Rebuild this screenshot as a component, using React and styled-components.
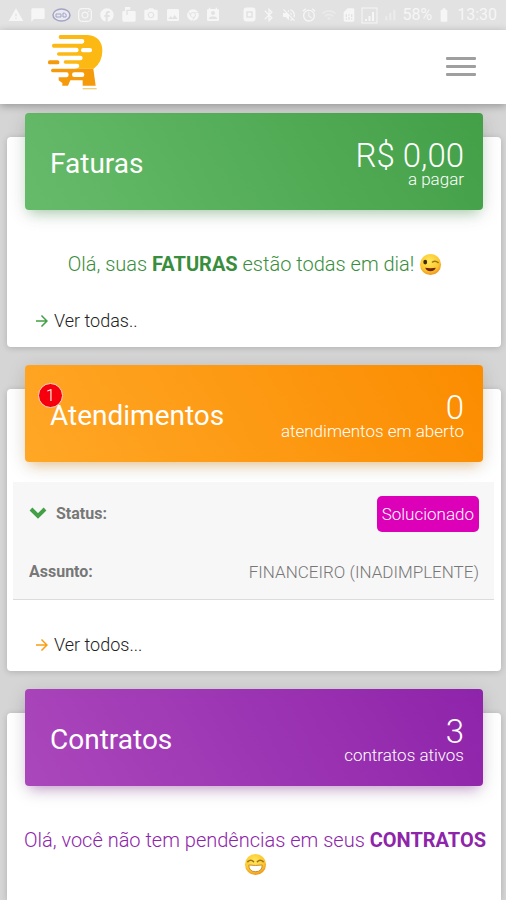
import React from "react";
import styled, { createGlobalStyle } from "styled-components";
import {
  MdWarning, MdChatBubble, MdFacebook, MdImage, MdBluetooth, MdVolumeOff,
  MdAlarm, MdWifi, MdSignalCellularAlt, MdBatteryFull, MdArrowForward,
  MdMarkunreadMailbox, MdPermContactCalendar, MdCameraAlt, MdSimCard,
} from "react-icons/md";
import { FaInstagram, FaChrome } from "react-icons/fa";

const GlobalStyle = createGlobalStyle`
  * { box-sizing: border-box; }
  body {
    margin: 0;
    background: #d5d5d5;
    font-family: Roboto, "Liberation Sans", sans-serif;
    font-weight: 300;
  }
  h2, p, dl, dd { margin: 0; }
`;

const Page = styled.div`
  display: flex;
  flex-direction: column;
  min-height: 100vh;
  overflow: hidden;
`;

const StatusBar = styled.div`
  display: flex;
  align-items: center;
  justify-content: space-between;
  height: 30px;
  padding: 0 9px 0 8px;
  background: #e2e2e2;
  color: #f6f6f6;
`;

const IconGroup = styled.div`
  display: flex;
  align-items: center;
  gap: ${(p) => p.$gap}px;
  font-size: 16px;
  line-height: 20px;
  font-weight: 400;
`;

const Clock = styled.span`
  margin-left: 1px;
`;

const TopBar = styled.header`
  display: flex;
  align-items: center;
  justify-content: space-between;
  height: 74px;
  padding: 0 30px 0 46px;
  background: #fff;
  box-shadow: 0 2px 8px rgba(0, 0, 0, 0.3);
  z-index: 1;
`;

const HomeLink = styled.a`
  display: flex;
  padding-bottom: 8px;
`;

const MenuButton = styled.button`
  display: flex;
  flex-direction: column;
  gap: 5px;
  width: 30px;
  padding: 0 0 2px;
  border: 0;
  background: none;
`;

const MenuLine = styled.span`
  width: 100%;
  height: 3px;
  border-radius: 1px;
  background: #9f9f9f;
`;

const Cards = styled.main`
  display: flex;
  flex: 1;
  flex-direction: column;
  gap: 42px;
  padding: 33px 5px 0 7px;
`;

const CardBox = styled.section`
  display: flex;
  flex-direction: column;
  border-radius: 4px;
  background: #fff;
  box-shadow: 0 1px 6px rgba(0, 0, 0, 0.18);

  &:last-child {
    flex: 1;
    border-radius: 4px 4px 0 0;
  }
`;

const Banner = styled.div`
  display: flex;
  align-items: center;
  justify-content: space-between;
  height: 97px;
  margin: -24px 18px 0;
  padding: 0 19px 0 25px;
  border-radius: 4px;
  color: #fff;
  background: linear-gradient(60deg, ${(p) => p.$from}, ${(p) => p.$to});
  box-shadow: 0 4px 20px rgba(0, 0, 0, 0.12), 0 7px 12px -5px ${(p) => p.$glow};
`;

const TitleWrap = styled.div`
  position: relative;
  padding-top: 4px;
`;

const Title = styled.h2`
  position: relative;
  font-size: 28px;
  line-height: 34px;
  font-weight: 400;
`;

const Count = styled.span`
  position: absolute;
  top: -12px;
  left: -12px;
  width: 25px;
  height: 25px;
  border: 1px solid #ffd9c8;
  border-radius: 50%;
  background: #f5000c;
  font-size: 16px;
  line-height: 23px;
  text-align: center;
`;

const Summary = styled.div`
  display: flex;
  flex-direction: column;
  padding-top: 7px;
  text-align: right;
`;

const Value = styled.span`
  font-size: 33px;
  line-height: 28px;
`;

const Caption = styled.span`
  font-size: 17px;
  line-height: 18px;
`;

const Message = styled.p`
  padding: 42px 12px 0 14px;
  color: ${(p) => p.$color};
  font-size: 20px;
  line-height: 24px;
  text-align: center;

  strong { font-weight: 700; }
  svg { vertical-align: -5px; }
`;

const MoreLink = styled.a`
  display: flex;
  align-items: center;
  gap: 3px;
  padding: 35px 26px 16px;
  color: #222;
  font-size: 18px;
  line-height: 20px;
  text-decoration: none;

  svg { color: ${(p) => p.$accent}; }
`;

const Details = styled.dl`
  margin: 20px 7px 0 6px;
  padding: 0 15px 0 16px;
  border-bottom: 1px solid #dcdcdc;
  background: #f7f7f7;
`;

const DetailRow = styled.div`
  display: flex;
  align-items: center;
  justify-content: space-between;
  height: ${(p) => p.$height}px;
  color: #777;
  font-size: 17px;
  line-height: 20px;
`;

const Term = styled.dt`
  display: flex;
  align-items: center;
  gap: 9px;
  font-size: 16px;
  font-weight: 700;
`;

const ToggleButton = styled.button`
  display: flex;
  padding: 0;
  border: 0;
  background: none;
`;

const Tag = styled.dd`
  padding: 8px 5px;
  border-radius: 5px;
  background: #dc00b8;
  color: #fff;
`;

const Logo = () => (
  <svg width="60" height="60" viewBox="18 16 180 180" role="img" aria-label="RA">
    <path fill="#fdb913" d="M61 22H143Q187 27 187 70Q187 104 161 123H105Q118 121 118 115Q118 108 111 108H76Q71 108 71 103Q71 98 76 98H121Q128 98 128 91Q128 84 121 84H56Q51 84 51 79Q51 74 56 74H109Q116 74 116 67Q116 60 109 60H41Q36 60 36 54Q36 48 41 48H126Q133 48 133 41Q133 34 126 34H61Q56 34 56 28Q56 22 61 22Z" />
    <rect x="123" y="61" width="33" height="13" rx="6" fill="#fff" />
    <rect x="24" y="98" width="34" height="12" rx="5" fill="#f59a0b" />
    <path fill="#f59a0b" d="M38 123H160L167 174H128V158H91L84 174H67V166L56 158V149H80Q86 148 86 141Q86 134 80 134H38Q33 134 33 128Q33 123 38 123Z" />
    <rect x="96" y="134" width="37" height="14" rx="7" fill="#fff" />
    <path d="M128 183H170" stroke="#f3cf7d" strokeWidth="4" />
  </svg>
);

const FaceGradient = ({ id }) => (
  <radialGradient id={id} cx="45%" cy="35%" r="65%">
    <stop offset="0" stopColor="#ffe95c" />
    <stop offset="0.7" stopColor="#fcc72f" />
    <stop offset="1" stopColor="#ec9421" />
  </radialGradient>
);

const WinkFace = () => (
  <svg width="23" height="23" viewBox="0 0 24 24" role="img" aria-label="😉">
    <FaceGradient id="wink" />
    <circle cx="12" cy="12" r="11" fill="url(#wink)" />
    <ellipse cx="6.5" cy="9.500" rx="2" ry="2.4" fill="#3c2b0c" />
    <path d="M14 9.500q3-2 6 .5" fill="none" stroke="#a0731c" strokeWidth="1.500" strokeLinecap="round" />
    <path d="M6.500 15.500q5.500 1 11 0q-1 3.500-5.500 3.500t-5.500-3.500z" fill="#762610" />
  </svg>
);

const GrinFace = () => (
  <svg width="23" height="23" viewBox="0 0 24 24" role="img" aria-label="😁">
    <FaceGradient id="grin" />
    <circle cx="12" cy="12" r="11" fill="url(#grin)" />
    <path d="M4 9q3-3 6 0M14 9q3-3 6 0" fill="none" stroke="#a0731c" strokeWidth="1.500" strokeLinecap="round" />
    <path d="M5 12.500q7 1 14 0q0 7-7 7t-7-7z" fill="#fff" stroke="#c98a22" />
  </svg>
);

const EyeBadge = () => (
  <svg width="19" height="14" viewBox="0 0 19 14">
    <ellipse cx="9.500" cy="7" rx="8.500" ry="6" fill="#e9e9f2" stroke="#a3a3c4" strokeWidth="1.500" />
    <path d="M4 6h5v3H4zM11 5q4 0 3 4h-3z" fill="none" stroke="#a3a3c4" />
  </svg>
);

const ClockSquare = () => (
  <svg width="14" height="16" viewBox="0 0 14 16" fill="none" stroke="currentColor">
    <rect x="1" y="1" width="11" height="13" rx="2" fill="currentColor" />
    <path d="M4 5h5v5H4z" stroke="#e2e2e2" strokeWidth="1.500" />
  </svg>
);

const BoxedSignal = () => (
  <svg width="17" height="17" viewBox="0 0 17 17" fill="none" stroke="currentColor">
    <rect x="1" y="1" width="15" height="15" />
    <path d="M5 14v-2M8.500 14V9M12 14V5" strokeWidth="2" />
  </svg>
);

const Chevron = () => (
  <svg width="18" height="13" viewBox="0 0 18 13">
    <path d="M2 2l7 7 7-7" fill="none" stroke="#43a047" strokeWidth="4" />
  </svg>
);

const themes = {
  green: { $from: "#66bb6a", $to: "#43a047", $glow: "rgba(76, 175, 80, 0.4)" },
  orange: { $from: "#ffa726", $to: "#fb8c00", $glow: "rgba(255, 152, 0, 0.4)" },
  purple: { $from: "#ab47bc", $to: "#8e24aa", $glow: "rgba(156, 39, 176, 0.4)" },
};

function Card({ theme, title, count, value, caption, children }) {
  return (
    <CardBox>
      <Banner {...themes[theme]}>
        <TitleWrap>
          {count && <Count>{count}</Count>}
          <Title>{title}</Title>
        </TitleWrap>
        <Summary>
          <Value>{value}</Value>
          <Caption>{caption}</Caption>
        </Summary>
      </Banner>
      {children}
    </CardBox>
  );
}

export default function App() {
  return (
    <Page>
      <GlobalStyle />
      <StatusBar>
        <IconGroup $gap={6}>
          <MdWarning /><MdChatBubble /><EyeBadge /><FaInstagram /><MdFacebook />
          <MdMarkunreadMailbox /><MdCameraAlt /><MdImage /><FaChrome size={12} /><MdPermContactCalendar />
        </IconGroup>
        <IconGroup $gap={4}>
          <ClockSquare /><MdBluetooth /><MdVolumeOff /><MdAlarm /><MdWifi opacity={0.4} /><MdSimCard />
          <BoxedSignal /><MdSignalCellularAlt opacity={0.5} />
          <span>58%</span><MdBatteryFull /><Clock>13:30</Clock>
        </IconGroup>
      </StatusBar>
      <TopBar>
        <HomeLink href="#"><Logo /></HomeLink>
        <MenuButton aria-label="Menu"><MenuLine /><MenuLine /><MenuLine /></MenuButton>
      </TopBar>
      <Cards>
        <Card theme="green" title="Faturas" value="R$ 0,00" caption="a pagar">
          <Message $color="#388e3c">
            Olá, suas <strong>FATURAS</strong> estão todas em dia! <WinkFace />
          </Message>
          <MoreLink href="#faturas" $accent="#43a047"><MdArrowForward />Ver todas..</MoreLink>
        </Card>
        <Card theme="orange" title="Atendimentos" count="1" value="0" caption="atendimentos em aberto">
          <Details>
            <DetailRow $height={63}>
              <Term><ToggleButton aria-label="Detalhes"><Chevron /></ToggleButton>Status:</Term>
              <Tag>Solucionado</Tag>
            </DetailRow>
            <DetailRow $height={54}>
              <Term>Assunto:</Term>
              <dd>FINANCEIRO (INADIMPLENTE)</dd>
            </DetailRow>
          </Details>
          <MoreLink href="#atendimentos" $accent="#fb9d14"><MdArrowForward />Ver todos...</MoreLink>
        </Card>
        <Card theme="purple" title="Contratos" value="3" caption="contratos ativos">
          <Message $color="#8e24aa">
            Olá, você não tem pendências em seus <strong>CONTRATOS</strong> <GrinFace />
          </Message>
        </Card>
      </Cards>
    </Page>
  );
}
